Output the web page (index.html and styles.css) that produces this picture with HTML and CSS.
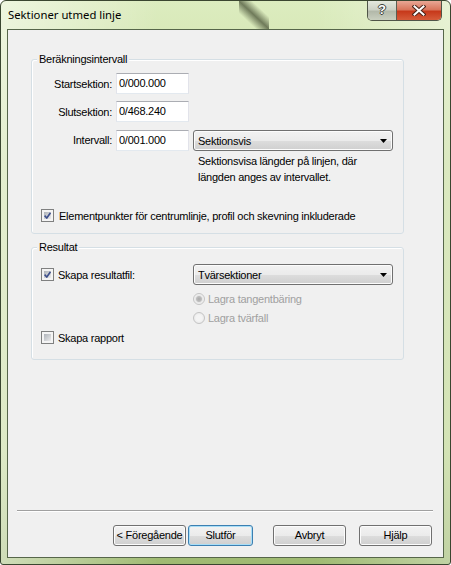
FILE: index.html
```html
<!DOCTYPE html>
<html lang="sv">

<head>
    <meta charset="UTF-8">
    <meta name="viewport" content="width=device-width, initial-scale=1.0">
    <title>Sektioner utmed linje</title>
    <link rel="stylesheet" href="styles.css">
</head>

<body>
    <div class="window">
        <div class="titlebar">
            <span class="title">Sektioner utmed linje</span>
            <span class="streak"></span>
            <div class="caption-btns">
                <span class="cap-help">?</span>
                <span class="cap-close">
                    <svg width="14" height="11" viewBox="0 0 14 11">
                        <path d="M2.5 1.5 L11.5 9.5 M11.5 1.5 L2.5 9.5" stroke="#4a2418" stroke-width="4" stroke-linecap="square"/>
                        <path d="M2.5 1.5 L11.5 9.5 M11.5 1.5 L2.5 9.5" stroke="#fff" stroke-width="2" stroke-linecap="square"/>
                    </svg>
                </span>
            </div>
        </div>

        <div class="client">
            <div class="group group-calc">
                <div class="group-title">Beräkningsintervall</div>
                <div class="calc-grid">
                    <span class="lbl">Startsektion:</span>
                    <span class="textbox">0/000.000</span>
                    <span></span>

                    <span class="lbl">Slutsektion:</span>
                    <span class="textbox">0/468.240</span>
                    <span></span>

                    <span class="lbl">Intervall:</span>
                    <span class="textbox">0/001.000</span>
                    <span class="combo">Sektionsvis
                        <svg width="7" height="4" viewBox="0 0 7 4"><path d="M0 0 H7 L3.5 4 Z" fill="#000"/></svg>
                    </span>

                    <span class="desc">Sektionsvisa längder på linjen, där<br>längden anges av intervallet.</span>
                </div>
                <div class="check-row elem-row">
                    <span class="check">
                        <svg width="7" height="7" viewBox="0 0 7 7"><path d="M0.6 3.6 L2.8 6 L6.5 0.8" stroke="#3d4f8c" stroke-width="1.6" fill="none"/></svg>
                    </span>
                    <span>Elementpunkter för centrumlinje, profil och skevning inkluderade</span>
                </div>
            </div>

            <div class="group group-result">
                <div class="group-title">Resultat</div>
                <div class="result-row">
                    <div class="check-row result-check">
                        <span class="check">
                            <svg width="7" height="7" viewBox="0 0 7 7"><path d="M0.6 3.6 L2.8 6 L6.5 0.8" stroke="#3d4f8c" stroke-width="1.6" fill="none"/></svg>
                        </span>
                        <span>Skapa resultatfil:</span>
                    </div>
                    <span class="combo">Tvärsektioner
                        <svg width="7" height="4" viewBox="0 0 7 4"><path d="M0 0 H7 L3.5 4 Z" fill="#000"/></svg>
                    </span>
                </div>
                <div class="radio-row first">
                    <span class="radio on"></span>
                    <span>Lagra tangentbäring</span>
                </div>
                <div class="radio-row">
                    <span class="radio"></span>
                    <span>Lagra tvärfall</span>
                </div>
                <div class="check-row report-row">
                    <span class="check"></span>
                    <span>Skapa rapport</span>
                </div>
            </div>

            <div class="spacer"></div>
            <div class="separator"></div>

            <div class="buttons">
                <span class="btn">&lt; Föregående</span>
                <span class="btn btn-default">Slutför</span>
                <span class="btn btn-cancel">Avbryt</span>
                <span class="btn btn-help">Hjälp</span>
            </div>
        </div>
    </div>
</body>

</html>
```

FILE: styles.css
```css
*{
    margin: 0;
    padding: 0;
    box-sizing: border-box;
}
body{
    width: 451px;
    height: 565px;
    font-family: "Liberation Sans", Arial, sans-serif;
    font-size: 11px;
    letter-spacing: -0.25px;
    color: #000;
}
.window{
    height: 565px;
    border: 1px solid #3a4630;
    border-radius: 6px 6px 3px 3px;
    background:
        linear-gradient(to right, rgba(255,255,255,0.5), rgba(255,255,255,0) 35%, rgba(255,255,255,0) 70%, rgba(255,255,255,0.35)),
        linear-gradient(#dcecbf, #c8dd9f 30%, #bdd58f 80%, #9fba72);
    display: flex;
    flex-direction: column;
    overflow: hidden;
}

/* title bar */
.titlebar{
    height: 28px;
    display: flex;
    align-items: flex-start;
}
.title{
    font-family: "Noto Sans", "Open Sans", sans-serif;
    font-size: 11.3px;
    letter-spacing: 0;
    line-height: 16px;
    padding: 6px 0 0 7px;
}
/* dark streak of the wallpaper seen through the glass */
.streak{
    width: 30px;
    height: 28px;
    margin: 0 98px 0 auto;
    background: linear-gradient(to top right, rgba(40,48,25,0) 28%, rgba(40,48,25,0.6) 50%, rgba(40,48,25,0) 72%);
}
.caption-btns{
    display: flex;
    height: 20px;
    margin-right: 8px;
    border: 1px solid #4f5548;
    border-top: 0;
    border-radius: 0 0 5px 5px;
    overflow: hidden;
}
.cap-help{
    width: 29px;
    text-align: center;
    font-weight: bold;
    font-size: 13px;
    letter-spacing: 0;
    line-height: 18px;
    color: #fff;
    text-shadow: 1px 0 #3b3f38, -1px 0 #3b3f38, 0 1px #3b3f38, 0 -1px #3b3f38;
    background: linear-gradient(#e4e8dd, #cdd2c6 45%, #b3b9aa 55%, #c9cfbf);
    border-right: 1px solid #5a5f52;
}
.cap-close{
    width: 44px;
    display: flex;
    align-items: center;
    justify-content: center;
    background: linear-gradient(#e9a795, #d9765d 45%, #c7391b 55%, #d65c3a);
}

/* client area */
.client{
    flex: 1;
    margin: 0 6px 6px;
    border: 1px solid #56664a;
    background: #f0f0f0;
    display: flex;
    flex-direction: column;
}
.group{
    margin-left: 23px;
    width: 373px;
    border: 1px solid #d5dfe5;
    border-radius: 3px;
    box-shadow: inset 1px 1px #fff;
}
.group-calc{
    margin-top: 29px;
    height: 175px;
}
.group-result{
    margin-top: 13px;
    height: 113px;
}
.group-title{
    margin: -7px 0 0 5px;
    padding: 0 2px;
    width: max-content;
    line-height: 13px;
    background: #f0f0f0;
}
.calc-grid{
    display: grid;
    grid-template-columns: 80px 73px 200px;
    column-gap: 4px;
    row-gap: 7px;
    margin-top: 7px;
    align-items: center;
}
.lbl{
    text-align: right;
}
.textbox{
    height: 21px;
    line-height: 19px;
    padding-left: 2px;
    background: #fff;
    border: 1px solid;
    border-color: #abadb3 #e2e3ea #e3e9ef #e2e3ea;
}
.combo{
    height: 21px;
    display: flex;
    justify-content: space-between;
    align-items: center;
    padding: 0 5px 0 4px;
    border: 1px solid #707070;
    border-radius: 3px;
    background: linear-gradient(#f2f2f2, #ebebeb 50%, #dddddd 51%, #cfcfcf);
    box-shadow: inset 0 0 0 1px #fcfcfc;
}
.calc-grid .combo{
    margin-top: 1px;
}
.desc{
    grid-column: 3;
    padding-left: 5px;
    line-height: 16px;
    margin-top: -5px;
}

/* checkboxes and radios */
.check-row{
    display: flex;
    align-items: center;
    gap: 5px;
    height: 13px;
}
.check{
    width: 13px;
    height: 13px;
    padding: 2px;
    border: 1px solid #7f8080;
    background: linear-gradient(135deg, #aeb3b9, #ebebec) content-box, #f4f4f4;
    display: flex;
    align-items: center;
    justify-content: center;
}
.elem-row{
    margin: 24px 0 0 9px;
}
.result-row{
    display: flex;
    align-items: center;
    height: 21px;
    margin-top: 10px;
    padding-left: 9px;
}
.result-check{
    width: 152px;
    gap: 4px;
}
.result-row .combo{
    width: 200px;
}
.radio-row{
    display: flex;
    align-items: center;
    gap: 3px;
    height: 13px;
    margin: 6px 0 0 161px;
    color: #a0a0a0;
}
.radio-row.first{
    margin-top: 7px;
}
.radio{
    width: 12px;
    height: 12px;
    border-radius: 50%;
    border: 1px solid #c4c4c4;
    background: radial-gradient(circle, #f4f4f4 40%, #e2e2e2);
}
.radio.on{
    background: radial-gradient(circle, #a9a9a9 0, #bdbdbd 2.5px, #e6e6e6 3.5px, #f2f2f2 5px);
}
.report-row{
    margin: 7px 0 0 9px;
    gap: 4px;
}

/* footer */
.spacer{
    flex: 1;
}
.separator{
    margin: 0 0 13px 9px;
    width: 416px;
    height: 2px;
    border-top: 1px solid #a0a0a0;
    border-bottom: 1px solid #fff;
}
.buttons{
    display: flex;
    justify-content: flex-end;
    padding-right: 11px;
    margin-bottom: 11px;
}
.btn{
    width: 73px;
    height: 21px;
    line-height: 19px;
    text-align: center;
    border: 1px solid #707070;
    border-radius: 3px;
    background: linear-gradient(#f2f2f2, #ebebeb 50%, #dddddd 51%, #cfcfcf);
    box-shadow: inset 0 0 0 1px #fcfcfc;
}
.btn-default{
    width: 65px;
    margin-left: 2px;
    border-color: #3c7fb1;
    box-shadow: inset 0 0 0 1px #a8def7;
}
.btn-cancel{
    margin-left: 20px;
}
.btn-help{
    margin-left: 13px;
}
```
